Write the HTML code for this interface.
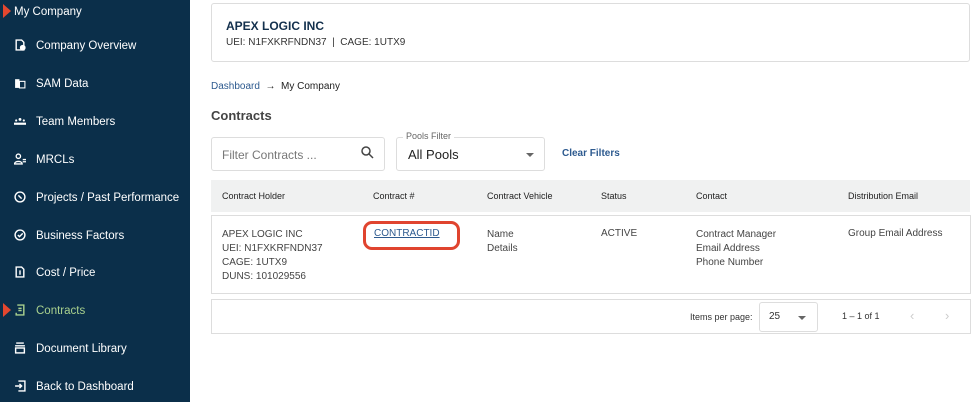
<!DOCTYPE html>
<html><head><style>
*{box-sizing:border-box;margin:0;padding:0}
body{width:978px;height:402px;overflow:hidden;background:#fff;font-family:"Liberation Sans",sans-serif;position:relative;color:#333}
.sb{position:absolute;left:0;top:0;width:190px;height:402px;background:#0b2f4a;color:#fff}
.it{position:absolute;left:36px;font-size:11.5px;line-height:14px;white-space:nowrap}
.ic{position:absolute;left:14px;width:12px;height:12px}
.tri{position:absolute;left:3px;width:0;height:0;border-top:7px solid transparent;border-bottom:7px solid transparent;border-left:8px solid #e4472f}
.a{position:absolute;white-space:nowrap}
.box{position:absolute;border:1px solid #ddd;border-radius:3px;background:#fff}
</style></head><body>
<div class="sb">
<div class="tri" style="top:4px"></div>
<div class="it" style="left:14px;top:5px">My Company</div>
<svg class="ic" style="top:39px" viewBox="0 0 11 11" fill="none" stroke="#fff" stroke-width="1.3"><path d="M2 1h5l2 2v7H2z"/><circle cx="8" cy="8" r="2" fill="#fff"/></svg>
<div class="it" style="top:39px">Company Overview</div>
<svg class="ic" style="top:77px" viewBox="0 0 11 11" fill="#fff"><rect x="1" y="2" width="4" height="8"/><rect x="5" y="4" width="5" height="6" fill="none" stroke="#fff"/></svg>
<div class="it" style="top:77px">SAM Data</div>
<svg class="ic" style="top:115px" viewBox="0 0 11 11" fill="#fff"><circle cx="2" cy="5" r="1"/><circle cx="5.5" cy="4" r="1.3"/><circle cx="9" cy="5" r="1"/><rect x="0" y="7" width="11" height="2"/></svg>
<div class="it" style="top:115px">Team Members</div>
<svg class="ic" style="top:153px" viewBox="0 0 11 11" fill="none" stroke="#fff" stroke-width="1.2"><circle cx="4" cy="3" r="2"/><path d="M0.5 10c0-3 7-3 7 0z"/><path d="M8 6h3M8 8h3"/></svg>
<div class="it" style="top:153px">MRCLs</div>
<svg class="ic" style="top:191px" viewBox="0 0 11 11" fill="none" stroke="#fff" stroke-width="1.3"><circle cx="5.5" cy="5.5" r="4.5"/><path d="M4 4l3 3"/></svg>
<div class="it" style="top:191px">Projects / Past Performance</div>
<svg class="ic" style="top:229px" viewBox="0 0 11 11" fill="none" stroke="#fff" stroke-width="1.3"><circle cx="5.5" cy="5.5" r="4.5"/><path d="M3.5 5.5l1.5 1.5 3-3"/></svg>
<div class="it" style="top:229px">Business Factors</div>
<svg class="ic" style="top:266px" viewBox="0 0 11 11" fill="none" stroke="#fff" stroke-width="1.3"><path d="M2 1h5l2 2v7H2z"/><path d="M5.5 4v4"/></svg>
<div class="it" style="top:266px">Cost / Price</div>
<div class="tri" style="top:303px"></div>
<svg class="ic" style="top:304px" viewBox="0 0 11 11" fill="none" stroke="#a9d18e" stroke-width="1.3"><path d="M3 1h6v9H2V8"/><path d="M4 4h3M4 6h3"/></svg>
<div class="it" style="top:304px;color:#a9d18e">Contracts</div>
<svg class="ic" style="top:342px" viewBox="0 0 11 11" fill="none" stroke="#fff" stroke-width="1.3"><path d="M2 1h7M1 3.5h9"/><rect x="1.5" y="5.5" width="8" height="4.5"/></svg>
<div class="it" style="top:342px">Document Library</div>
<svg class="ic" style="top:380px" viewBox="0 0 11 11" fill="none" stroke="#fff" stroke-width="1.3"><path d="M4 1h6v9H4"/><path d="M1 5.5h6M5 3.5l2 2-2 2"/></svg>
<div class="it" style="top:380px">Back to Dashboard</div>
</div>

<div class="box" style="left:211px;top:3px;width:759px;height:59px"></div>
<div class="a" style="left:226px;top:19px;font-size:12px;font-weight:bold;color:#13304d">APEX LOGIC INC</div>
<div class="a" style="left:226px;top:37px;font-size:10px;color:#333">UEI: N1FXKRFNDN37 &nbsp;| &nbsp;CAGE: 1UTX9</div>
<div class="a" style="left:211px;top:81px;font-size:10px;color:#2d5a8f">Dashboard <span style="color:#222">&nbsp;&#8594;&nbsp; My Company</span></div>
<div class="a" style="left:211px;top:108px;font-size:13px;font-weight:bold;color:#444">Contracts</div>

<div class="box" style="left:211px;top:137px;width:174px;height:34px"></div>
<div class="a" style="left:222px;top:148px;font-size:12px;color:#777">Filter Contracts ...</div>
<svg class="a" style="left:361px;top:146px" width="13" height="13" viewBox="0 0 13 13" fill="none" stroke="#444" stroke-width="1.5"><circle cx="5" cy="5" r="4"/><path d="M8 8l4 4"/></svg>
<div class="box" style="left:396px;top:137px;width:149px;height:34px"></div>
<div class="a" style="left:403px;top:131px;font-size:9px;color:#666;background:#fff;padding:0 3px">Pools Filter</div>
<div class="a" style="left:408px;top:147px;font-size:13px;color:#222">All Pools</div>
<div class="a" style="left:526px;top:153px;border-left:4px solid transparent;border-right:4px solid transparent;border-top:4px solid #666"></div>
<div class="a" style="left:562px;top:148px;font-size:10px;font-weight:bold;color:#2d5a8f">Clear Filters</div>

<div class="a" style="left:211px;top:180px;width:759px;height:32px;background:#f0f1f1"></div>
<div class="a" style="left:222px;top:191px;font-size:9px;color:#222">Contract Holder</div>
<div class="a" style="left:373px;top:191px;font-size:9px;color:#222">Contract #</div>
<div class="a" style="left:487px;top:191px;font-size:9px;color:#222">Contract Vehicle</div>
<div class="a" style="left:601px;top:191px;font-size:9px;color:#222">Status</div>
<div class="a" style="left:696px;top:191px;font-size:9px;color:#222">Contact</div>
<div class="a" style="left:848px;top:191px;font-size:9px;color:#222">Distribution Email</div>

<div class="box" style="left:211px;top:215px;width:760px;height:79px;border-radius:0"></div>
<div class="a" style="left:222px;top:228px;font-size:10px;line-height:14px;color:#444">APEX LOGIC INC<br>UEI: N1FXKRFNDN37<br>CAGE: 1UTX9<br>DUNS: 101029556</div>
<div class="a" style="left:363px;top:221px;width:97px;height:29px;border:3px solid #e0442f;border-radius:9px"></div>
<div class="a" style="left:374px;top:228px;font-size:10px;color:#2d5a8f;text-decoration:underline">CONTRACTID</div>
<div class="a" style="left:487px;top:228px;font-size:10px;line-height:14px;color:#444">Name<br>Details</div>
<div class="a" style="left:601px;top:228px;font-size:10px;color:#444">ACTIVE</div>
<div class="a" style="left:696px;top:228px;font-size:10px;line-height:14px;color:#444">Contract Manager<br>Email Address<br>Phone Number</div>
<div class="a" style="left:848px;top:228px;font-size:10px;color:#444">Group Email Address</div>

<div class="box" style="left:211px;top:299px;width:760px;height:35px;border-radius:0"></div>
<div class="a" style="left:690px;top:312px;font-size:9px;color:#333">Items per page:</div>
<div class="box" style="left:759px;top:302px;width:59px;height:30px"></div>
<div class="a" style="left:769px;top:311px;font-size:10px;color:#333">25</div>
<div class="a" style="left:798px;top:316px;border-left:4px solid transparent;border-right:4px solid transparent;border-top:4px solid #666"></div>
<div class="a" style="left:842px;top:311px;font-size:9px;color:#333">1 – 1 of 1</div>
<div class="a" style="left:910px;top:308px;font-size:13px;color:#ccc">&#8249;</div>
<div class="a" style="left:945px;top:308px;font-size:13px;color:#ccc">&#8250;</div>
</body></html>
